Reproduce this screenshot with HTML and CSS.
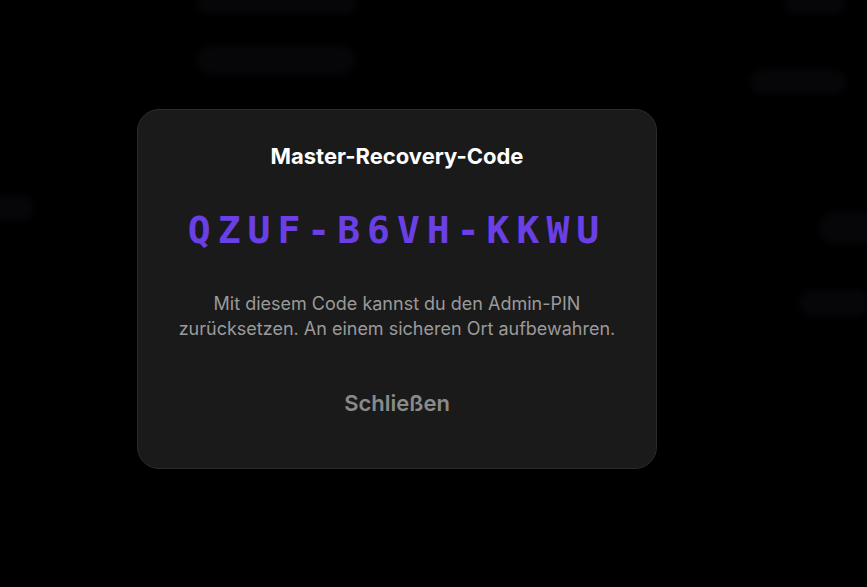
FILE: index.html
```html
<!DOCTYPE html>
<html lang="de">
<head>
<meta charset="utf-8">
<title>Master-Recovery-Code</title>
<link rel="stylesheet" href="styles.css">
</head>
<body>
<div class="backdrop">
  <div class="ghost g1"></div>
  <div class="ghost g2"></div>
  <div class="ghost g3"></div>
  <div class="ghost g4"></div>
  <div class="ghost g5"></div>
  <div class="ghost g6"></div>
  <div class="ghost g7"></div>
</div>
<main class="stage">
  <section class="modal">
    <h2 class="title">Master-Recovery-Code</h2>
    <div class="code">QZUF-B6VH-KKWU</div>
    <p class="desc">Mit diesem Code kannst du den Admin-PIN zurücksetzen. An einem sicheren Ort aufbewahren.</p>
    <button class="close">Schließen</button>
  </section>
</main>
</body>
</html>
```

FILE: styles.css
```css
html, body {
  margin: 0;
  padding: 0;
  height: 100%;
  background: #000;
  overflow: hidden;
  font-family: Inter, "Noto Sans", sans-serif;
}
.backdrop {
  position: fixed;
  inset: 0;
  filter: blur(3px);
}
.ghost {
  position: absolute;
  background: #060609;
  border-radius: 14px;
}
.g1 { left: 197px; top: -10px; width: 160px; height: 24px; }
.g2 { left: 197px; top: 46px; width: 158px; height: 28px; }
.g3 { left: 785px; top: -10px; width: 60px; height: 24px; }
.g4 { left: 750px; top: 70px; width: 96px; height: 24px; }
.g5 { left: -10px; top: 196px; width: 44px; height: 24px; }
.g6 { left: 820px; top: 212px; width: 60px; height: 32px; }
.g7 { left: 800px; top: 290px; width: 70px; height: 26px; }
.stage {
  position: relative;
  padding: 109px 0 0 137px;
}
.modal {
  width: 518px;
  height: 358px;
  box-sizing: content-box;
  background: #1a1a1a;
  border: 1px solid #2c2c2e;
  border-radius: 22px;
  display: flex;
  flex-direction: column;
  align-items: center;
}
.title {
  margin: 32px 0 0;
  font-size: 22px;
  font-weight: 700;
  color: #fff;
  line-height: 28px;
}
.code {
  margin-top: 37px;
  font-family: "DejaVu Sans Mono", monospace;
  font-size: 38px;
  font-weight: 700;
  letter-spacing: 7px;
  color: #6a40e6;
  line-height: 46px;
}
.desc {
  margin: 38px 0 0;
  width: 450px;
  text-align: center;
  font-size: 18px;
  line-height: 25px;
  color: #9a9a9a;
}
.close {
  margin-top: 43px;
  background: none;
  border: none;
  font-family: inherit;
  font-size: 22px;
  font-weight: 600;
  color: #8a8a8a;
  padding: 6px 16px;
  cursor: pointer;
}
```
